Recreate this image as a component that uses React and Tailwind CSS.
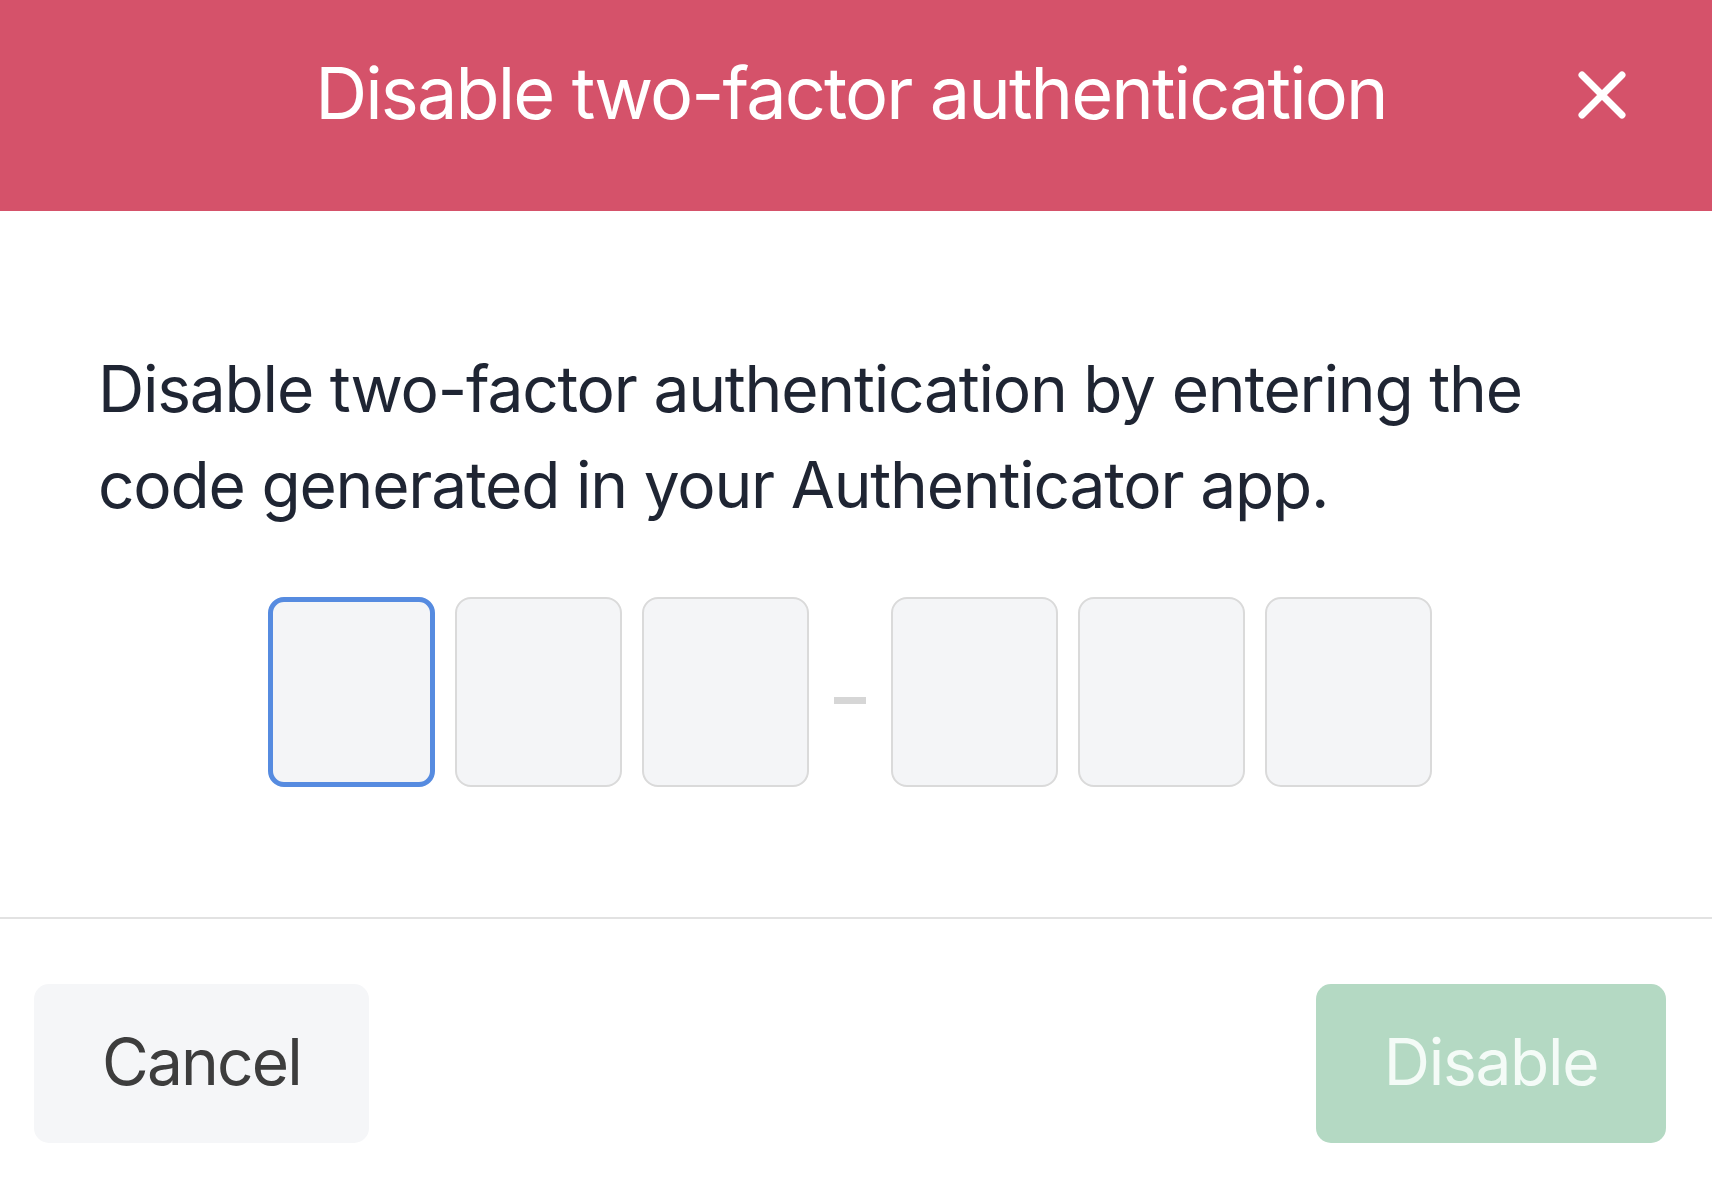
import { useState } from 'react'

// SINGLE CODE DIGIT BOX
function DigitBox({ focused }) {
  return (
    <div
      className={
        focused
          ? 'w-[167px] h-[190px] rounded-[16px] bg-[#f4f5f7] border-[5px] border-[#568be0]'
          : 'w-[167px] h-[190px] rounded-[16px] bg-[#f4f5f7] border-[2.5px] border-[#dadada]'
      }
    />
  )
}

function App() {
  const [code] = useState(['', '', '', '', '', ''])

  return (
    <div className="w-[1712px] h-[1192px] bg-white flex flex-col font-['Inter','Noto_Sans',sans-serif] overflow-hidden">
      {/* HEADER */}
      <header className="h-[211px] bg-[#d5526a] grid grid-cols-[1fr_auto_1fr] items-center pr-[10px] shrink-0">
        <div />
        <h1 className="text-white text-[72px] leading-none tracking-[-1.9px] pb-[26px]">
          Disable two-factor authentication
        </h1>
        <button className="justify-self-end mr-[75px] mb-[22px] w-[50px] h-[50px] flex items-center justify-center">
          <svg width="50" height="50" viewBox="0 0 50 50" fill="none">
            <path d="M5 5L45 45M45 5L5 45" stroke="white" strokeWidth="7" strokeLinecap="round" />
          </svg>
        </button>
      </header>

      {/* BODY */}
      <section className="pt-[130px] pb-[130px] px-[98px]">
        <p className="text-[64px] leading-[96px] tracking-[-1.2px] text-[#1f2533]">
          Disable two-factor authentication by entering the code generated in your Authenticator app.
        </p>

        <div className="mt-[64px] flex items-center justify-center pr-[12px]">
          <div className="flex gap-[20px]">
            {code.slice(0, 3).map((_, i) => (
              <DigitBox key={i} focused={i === 0} />
            ))}
          </div>
          <div className="mx-[25px] mt-[16px] w-[32px] h-[7px] bg-[#d6d6d6]" />
          <div className="flex gap-[20px]">
            {code.slice(3).map((_, i) => (
              <DigitBox key={i} />
            ))}
          </div>
        </div>
      </section>

      {/* FOOTER */}
      <div className="h-[2px] bg-[#e2e2e2] shrink-0" />
      <footer className="pt-[65px] pl-[34px] pr-[46px] flex justify-between">
        <button className="w-[335px] h-[159px] rounded-[15px] bg-[#f5f6f8] text-[64px] tracking-[-1.8px] text-[#3d3d3d] pb-[4px]">
          Cancel
        </button>
        <button className="w-[350px] h-[159px] rounded-[15px] bg-[#b4d9c3] text-[64px] tracking-[-1.3px] text-[#f4fbf7] pb-[4px]">
          Disable
        </button>
      </footer>
    </div>
  )
}

export default App
